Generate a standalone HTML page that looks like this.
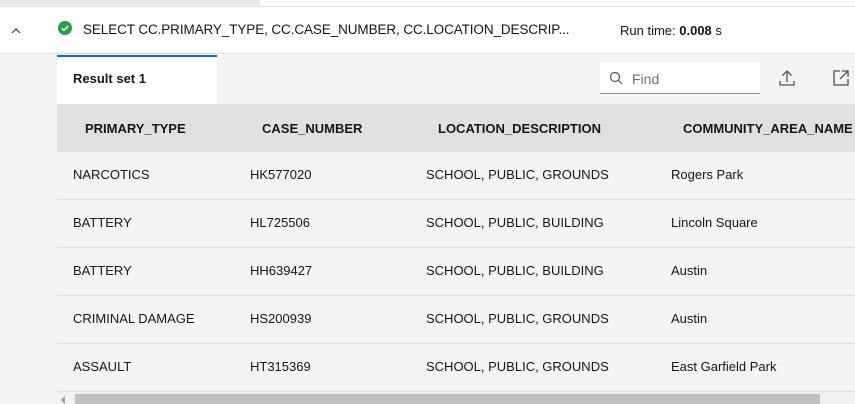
<!DOCTYPE html>
<html><head><style>
*{margin:0;padding:0;box-sizing:border-box}
body{width:855px;height:404px;overflow:hidden;background:#f4f4f4;font-family:"Liberation Sans",sans-serif;color:#161616;position:relative}
.abs{position:absolute}
.t{position:absolute;font-size:13px;white-space:nowrap;letter-spacing:0}
.h{font-weight:bold;font-size:13px}
.row{position:absolute;left:57px;width:798px;height:48px;border-bottom:1px solid #e0e0e0;background:#f4f4f4}
</style></head><body>
<div class="abs" style="left:0;top:0;width:260px;height:6px;background:#e8e8e8"></div>
<div class="abs" style="left:260px;top:0;width:595px;height:6px;background:#fff"></div>
<div class="abs" style="left:0;top:6px;width:855px;height:48px;background:#fff;border-top:1px solid #e0e0e0;border-bottom:1px solid #e0e0e0"></div>
<svg class="abs" style="left:10px;top:27px" width="12" height="8" viewBox="0 0 12 8"><path d="M2 6 L6 2 L10 6" fill="none" stroke="#333" stroke-width="1.2"/></svg>
<svg class="abs" style="left:58px;top:21px" width="14" height="14" viewBox="0 0 14 14"><circle cx="7" cy="7" r="7" fill="#24a148"/><path d="M3.8 7.2 L6 9.3 L10.2 4.9" fill="none" stroke="#fff" stroke-width="1.6"/></svg>
<div class="t" style="left:83px;top:22px;font-size:13.5px;letter-spacing:-0.1px">SELECT CC.PRIMARY_TYPE, CC.CASE_NUMBER, CC.LOCATION_DESCRIP...</div>
<div class="t" style="left:620px;top:23px">Run time: <b>0.008</b> s</div>
<div class="abs" style="left:57px;top:55px;width:160px;height:49px;background:#fff;border-top:2px solid #0f62fe"></div>
<div class="t h" style="left:73px;top:71px">Result set 1</div>
<div class="abs" style="left:600px;top:63px;width:160px;height:31px;background:#fff;border-bottom:1px solid #8d8d8d"></div>
<svg class="abs" style="left:609px;top:71px" width="14" height="14" viewBox="0 0 14 14"><circle cx="6" cy="6" r="4.5" fill="none" stroke="#525252" stroke-width="1.2"/><path d="M9.2 9.2 L13 13" stroke="#525252" stroke-width="1.2"/></svg>
<div class="t" style="left:632px;top:71px;color:#6f6f6f;font-size:14px">Find</div>
<svg class="abs" style="left:778px;top:69px" width="18" height="18" viewBox="0 0 18 18"><path d="M9 13 V2 M4.5 6.5 L9 2 L13.5 6.5 M2 12 V16 H16 V12" fill="none" stroke="#525252" stroke-width="1.3"/></svg>
<svg class="abs" style="left:832px;top:69px" width="18" height="18" viewBox="0 0 18 18"><path d="M8 2 H2 V16 H16 V10 M10 2 H16 V8 M16 2 L8 10" fill="none" stroke="#525252" stroke-width="1.3"/></svg>
<div class="abs" style="left:57px;top:104px;width:798px;height:48px;background:#e0e0e0"></div>
<div class="t h" style="left:85px;top:121px">PRIMARY_TYPE</div>
<div class="t h" style="left:262px;top:121px">CASE_NUMBER</div>
<div class="t h" style="left:438px;top:121px">LOCATION_DESCRIPTION</div>
<div class="t h" style="left:683px;top:121px">COMMUNITY_AREA_NAME</div>
<div class="row" style="top:152px"></div><div class="row" style="top:200px"></div><div class="row" style="top:248px"></div><div class="row" style="top:296px"></div><div class="row" style="top:344px"></div>
<div class="t" style="left:73px;top:167px">NARCOTICS</div><div class="t" style="left:250px;top:167px">HK577020</div><div class="t" style="left:426px;top:167px">SCHOOL, PUBLIC, GROUNDS</div><div class="t" style="left:671px;top:167px">Rogers Park</div>
<div class="t" style="left:73px;top:215px">BATTERY</div><div class="t" style="left:250px;top:215px">HL725506</div><div class="t" style="left:426px;top:215px">SCHOOL, PUBLIC, BUILDING</div><div class="t" style="left:671px;top:215px">Lincoln Square</div>
<div class="t" style="left:73px;top:263px">BATTERY</div><div class="t" style="left:250px;top:263px">HH639427</div><div class="t" style="left:426px;top:263px">SCHOOL, PUBLIC, BUILDING</div><div class="t" style="left:671px;top:263px">Austin</div>
<div class="t" style="left:73px;top:311px">CRIMINAL DAMAGE</div><div class="t" style="left:250px;top:311px">HS200939</div><div class="t" style="left:426px;top:311px">SCHOOL, PUBLIC, GROUNDS</div><div class="t" style="left:671px;top:311px">Austin</div>
<div class="t" style="left:73px;top:359px">ASSAULT</div><div class="t" style="left:250px;top:359px">HT315369</div><div class="t" style="left:426px;top:359px">SCHOOL, PUBLIC, GROUNDS</div><div class="t" style="left:671px;top:359px">East Garfield Park</div>
<div class="abs" style="left:57px;top:392px;width:798px;height:12px;background:#f1f1f1"></div>
<div class="abs" style="left:75px;top:394px;width:745px;height:10px;background:#c1c1c1"></div>
<svg class="abs" style="left:61px;top:396px" width="5" height="8" viewBox="0 0 5 8"><path d="M4 0 L0 4 L4 8Z" fill="#a0a0a0"/></svg>
</body></html>
